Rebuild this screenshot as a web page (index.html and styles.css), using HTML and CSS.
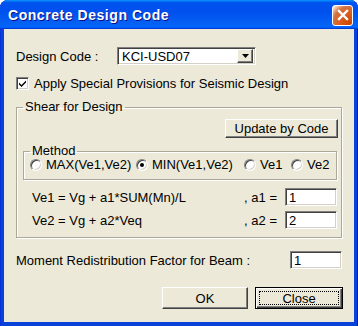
FILE: index.html
```html
<!DOCTYPE html>
<html lang="en">
<head>
<meta charset="UTF-8">
<title>Concrete Design Code</title>
<link rel="stylesheet" href="styles.css">
</head>
<body>
<div class="window">
    <div class="titlebar">
        <span class="title">Concrete Design Code</span>
        <button class="close-x" aria-label="Close">
            <svg width="12" height="12" viewBox="0 0 12 12"><path d="M2 2L10 10M10 2L2 10" stroke="#fff" stroke-width="2.4" stroke-linecap="square"/></svg>
        </button>
    </div>

    <div class="client">
        <div class="row code-row">
            <label class="lbl-code">Design Code :</label>
            <div class="combo">
                <span class="combo-text">KCI-USD07</span>
                <span class="combo-btn">
                    <svg width="7" height="4" viewBox="0 0 7 4"><path d="M0 0H7L3.5 4Z" fill="#000"/></svg>
                </span>
            </div>
        </div>

        <div class="row check-row">
            <span class="checkbox">
                <svg width="9" height="9" viewBox="0 0 9 9"><path d="M1 3.5L3.5 6L8 1.5V3.5L3.5 8L1 5.5Z" fill="#000"/></svg>
            </span>
            <span>Apply Special Provisions for Seismic Design</span>
        </div>

        <fieldset class="group shear">
            <legend>Shear for Design</legend>
            <div class="shear-body">
                <div class="update-row">
                    <button class="btn btn-update">Update by Code</button>
                </div>

                <fieldset class="group method">
                    <legend>Method</legend>
                    <div class="radios">
                        <span class="radio-item w1"><span class="radio"></span>MAX(Ve1,Ve2)</span>
                        <span class="radio-item w2"><span class="radio on"></span>MIN(Ve1,Ve2)</span>
                        <span class="radio-item w3"><span class="radio"></span>Ve1</span>
                        <span class="radio-item"><span class="radio"></span>Ve2</span>
                    </div>
                </fieldset>

                <div class="row ve-row first">
                    <span class="formula">Ve1 = Vg + a1*SUM(Mn)/L</span>
                    <span class="coef">, a1 =</span>
                    <span class="field">1</span>
                </div>
                <div class="row ve-row">
                    <span class="formula">Ve2 = Vg + a2*Veq</span>
                    <span class="coef">, a2 =</span>
                    <span class="field">2</span>
                </div>
            </div>
        </fieldset>

        <div class="row moment-row">
            <span class="formula">Moment Redistribution Factor for Beam :</span>
            <span class="field field-moment">1</span>
        </div>

        <div class="buttons">
            <button class="btn btn-ok">OK</button>
            <button class="btn btn-close"><span class="focus">Close</span></button>
        </div>
    </div>
</div>
</body>
</html>
```

FILE: styles.css
```css
/* Dialog styles */
* {
    box-sizing: border-box;
}

body {
    margin: 0;
    padding: 0;
    background: #fff;
    font-family: "Liberation Sans", Arial, sans-serif;
    font-size: 13px;
    color: #000;
}

.window {
    width: 358px;
    height: 326px;
    display: flex;
    flex-direction: column;
    background: #0842D9;
    border-radius: 8px 8px 0 0;
    box-shadow: inset 1px 0 #0831D9, inset -1px 0 #001EA0;
}

.titlebar {
    height: 29px;
    display: flex;
    align-items: center;
    justify-content: space-between;
    padding: 0 5px 0 8px;
    border-radius: 8px 8px 0 0;
    background: linear-gradient(to bottom, #0997ff 0%, #0053ee 9%, #0050ee 40%, #0563f5 86%, #0066ff 92%, #005bff 95%, #003dd7 97%, #003dd7 100%);
}

.title {
    color: #fff;
    font-weight: bold;
    font-size: 14px;
    letter-spacing: 0.55px;
    text-shadow: 1px 1px #0f1089;
    margin-top: 1px;
}

.close-x {
    width: 21px;
    height: 21px;
    padding: 0;
    border: 1px solid #fff;
    border-radius: 3px;
    display: flex;
    align-items: center;
    justify-content: center;
    background: radial-gradient(circle at 90% 90%, #cc4600 0%, #dc6527 55%, #cd7546 70%, #ffccb2 90%, #fff 100%);
    margin-top: 1px;
}

.client {
    flex: 1;
    margin: 0 4px 4px;
    background: #ECE9D8;
    padding: 18px 12px 0 12px;
}

.row {
    display: flex;
    align-items: center;
}

.code-row {
    height: 18px;
}

.lbl-code {
    width: 101px;
}

.combo {
    width: 139px;
    height: 18px;
    display: flex;
    align-items: center;
    justify-content: space-between;
    background: #fff;
    border: 1px solid;
    border-color: #808080 #fff #fff #808080;
    box-shadow: inset 1px 1px #404040, inset -1px -1px #D4D0C8;
    padding: 2px 2px 2px 4px;
}

.combo-btn {
    width: 16px;
    height: 14px;
    display: flex;
    align-items: center;
    justify-content: center;
    background: #ECE9D8;
    border: 1px solid;
    border-color: #fff #404040 #404040 #fff;
    box-shadow: inset -1px -1px #808080;
}

.check-row {
    margin-top: 12px;
    height: 13px;
}

.checkbox {
    width: 13px;
    height: 13px;
    margin-right: 5px;
    display: flex;
    align-items: center;
    justify-content: center;
    background: #fff;
    border: 1px solid;
    border-color: #808080 #fff #fff #808080;
    box-shadow: inset 1px 1px #404040, inset -1px -1px #D4D0C8;
}

.group {
    margin: 0;
    padding: 0;
    border: 1px solid #ACA899;
    box-shadow: inset 1px 1px #fff, 1px 1px #fff;
    min-width: 0;
}

.group legend {
    font-size: 13px;
    line-height: 14px;
    padding: 0 2px;
    margin-left: 6px;
}

.shear {
    margin-top: 10px;
    width: 326px;
}

.shear-body {
    padding: 5px 3px 8px 6px;
}

.update-row {
    display: flex;
    justify-content: flex-end;
}

.btn {
    font-family: "Liberation Sans", Arial, sans-serif;
    font-size: 13px;
    color: #000;
    background: #ECE9D8;
    border: 1px solid;
    border-color: #fff #404040 #404040 #fff;
    box-shadow: inset -1px -1px #808080;
    padding: 0;
}

.btn-update {
    width: 113px;
    height: 19px;
}

.method {
    margin: 6px 1px 0 0;
}

.radios {
    display: flex;
    align-items: center;
    height: 13px;
    padding-left: 6px;
    margin-bottom: 8px;
}

.radio-item {
    display: flex;
    align-items: center;
}

.w1 { width: 106px; }
.w2 { width: 108px; }
.w3 { width: 47px; }

.radio {
    width: 12px;
    height: 12px;
    margin-right: 4px;
    border-radius: 50%;
    background: #fff;
    border: 1px solid;
    border-color: #808080 #fff #fff #808080;
    box-shadow: inset 1px 1px #404040, inset -1px -1px #D4D0C8;
    position: relative;
}

.radio.on::after {
    content: "";
    position: absolute;
    left: 3px;
    top: 3px;
    width: 4px;
    height: 4px;
    border-radius: 50%;
    background: #000;
}

.ve-row {
    height: 18px;
    margin-top: 5px;
    padding-left: 9px;
    padding-right: 1px;
}

.ve-row.first {
    margin-top: 8px;
}

.formula {
    flex: 1;
}

.coef {
    margin-right: 8px;
}

.field {
    width: 52px;
    height: 18px;
    background: #fff;
    border: 1px solid;
    border-color: #808080 #fff #fff #808080;
    box-shadow: inset 1px 1px #404040, inset -1px -1px #D4D0C8;
    padding: 1px 3px;
    line-height: 15px;
}

.moment-row {
    margin-top: 13px;
    height: 18px;
}

.buttons {
    margin-top: 18px;
    display: flex;
    justify-content: flex-end;
    gap: 7px;
    margin-right: -1px;
}

.btn-ok {
    width: 86px;
    height: 22px;
}

.btn-close {
    width: 88px;
    height: 22px;
    border: 1px solid #000;
    box-shadow: inset 1px 1px #fff, inset -1px -1px #404040, inset -2px -2px #808080;
    display: flex;
    align-items: center;
    justify-content: center;
    padding: 3px;
}

.focus {
    width: 100%;
    height: 100%;
    border: 1px dotted #000;
    display: flex;
    align-items: center;
    justify-content: center;
}
```
